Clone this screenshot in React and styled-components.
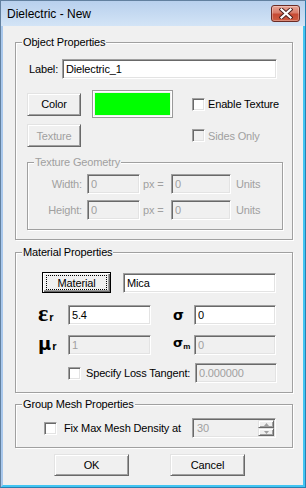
import React from "react";
import styled, { createGlobalStyle, css } from "styled-components";

const GlobalStyle = createGlobalStyle`
  html, body { margin: 0; padding: 0; background: #f0f0f0; }
  body {
    font-family: "Liberation Sans", Arial, sans-serif;
    font-size: 11px;
    letter-spacing: -0.15px;
    color: #000;
  }
  * { box-sizing: border-box; }
`;

const raised = css`
  border: 1px solid;
  border-color: #e3e3e3 #696969 #696969 #e3e3e3;
  box-shadow: inset 1px 1px 0 #fff, inset -1px -1px 0 #a0a0a0;
  background: #f0f0f0;
`;

const sunken = css`
  border: 1px solid;
  border-color: #a0a0a0 #fff #fff #a0a0a0;
  box-shadow: inset 1px 1px 0 #696969, inset -1px -1px 0 #e3e3e3;
`;

const Window = styled.div`
  width: 306px;
  height: 488px;
  border: 1px solid;
  border-color: #62809f #2a7fb0 #2a7fb0 #62809f;
  display: flex;
  flex-direction: column;
  background: #f0f0f0;
`;

const TitleBar = styled.div`
  height: 25px;
  flex: none;
  display: flex;
  align-items: center;
  padding: 0 5px 0 6px;
  background: linear-gradient(#b8d0ed, #d3e4f6);
`;

const Title = styled.span`
  flex: 1;
  font-size: 12px;
  letter-spacing: 0;
  color: #000;
`;

const CloseButton = styled.div`
  width: 29px;
  height: 17px;
  align-self: flex-start;
  margin-top: 4px;
  border: 1px solid #6b2b25;
  border-radius: 3px;
  background: linear-gradient(#e8a597 0%, #d87c6a 45%, #c64a34 55%, #cd5c42 100%);
  box-shadow: inset 0 0 0 1px rgba(255, 255, 255, 0.3);
  display: flex;
  align-items: center;
  justify-content: center;
`;

const Frame = styled.div`
  flex: 1;
  display: flex;
  flex-direction: column;
  border-style: solid;
  border-width: 0 2px 2px 2px;
  border-color: #a9c8ec #42c5f2 #42c5f2 #a9c8ec;
  padding: 10px 10px 0 12px;
`;

const Group = styled.fieldset`
  margin: ${(p) => p.$mt || 0}px 0 0 0;
  padding: 0;
  min-width: 0;
  border: 1px solid #a0a0a0;
  box-shadow: inset 1px 1px 0 #fff, 1px 1px 0 #fff;
`;

const Legend = styled.legend`
  margin-left: 6px;
  padding: 0 1px;
  height: 13px;
  line-height: 13px;
  background: #f0f0f0;
  color: ${(p) => (p.$disabled ? "#a0a0a0" : "#000")};
`;

const GroupBody = styled.div`
  padding: ${(p) => p.$pad};
`;

const LabelRow = styled.div`
  display: grid;
  grid-template-columns: 33px 215px;
  align-items: center;
  height: 20px;
  margin-left: 2px;
`;

const Text = styled.span`
  white-space: nowrap;
  color: ${(p) => (p.$disabled ? "#a0a0a0" : "#000")};
`;

const Field = styled.input`
  ${sunken};
  width: ${(p) => p.$w}px;
  height: 20px;
  padding: 0 3px;
  margin: 0;
  font: inherit;
  letter-spacing: inherit;
  outline: none;
  background: ${(p) => (p.disabled ? "#f0f0f0" : "#fff")};
  color: ${(p) => (p.disabled ? "#a0a0a0" : "#000")};
  -webkit-text-fill-color: ${(p) => (p.disabled ? "#a0a0a0" : "#000")};
  opacity: 1;
  margin-left: ${(p) => (p.$auto ? "auto" : "0")};
`;

const Button = styled.button`
  ${raised};
  width: ${(p) => p.$w}px;
  height: ${(p) => p.$h}px;
  padding: 0;
  margin: 0;
  font: inherit;
  letter-spacing: inherit;
  color: ${(p) => (p.disabled ? "#a0a0a0" : "#000")};
  display: flex;
  align-items: center;
  justify-content: center;
`;

const DefaultButton = styled.button`
  width: ${(p) => p.$w}px;
  height: ${(p) => p.$h}px;
  padding: 2px 3px;
  margin: 0;
  font: inherit;
  letter-spacing: inherit;
  color: #000;
  background: #f0f0f0;
  border: 1px solid #000;
  box-shadow: inset 1px 1px 0 #fff, inset -1px -1px 0 #696969, inset -2px -2px 0 #a0a0a0;
  display: flex;
`;

const FocusRect = styled.span`
  flex: 1;
  border: 1px dotted #000;
  display: flex;
  align-items: center;
  justify-content: center;
`;

const ColorGrid = styled.div`
  display: grid;
  grid-template-columns: 65px 100px 1fr;
  grid-template-rows: 28px 23px;
  row-gap: 6px;
  align-items: center;
  margin-top: 11px;
`;

const Swatch = styled.div`
  width: 81px;
  height: 28px;
  border: 1px solid #9a9a9a;
  box-shadow: inset 0 0 0 1px #fff;
  padding: 2px;
  background: #f0f0f0;
`;

const SwatchFill = styled.div`
  width: 100%;
  height: 100%;
  background: ${(p) => p.$color};
`;

const CheckWrap = styled.label`
  display: flex;
  align-items: center;
  gap: ${(p) => p.$gap}px;
  white-space: nowrap;
  color: ${(p) => (p.$disabled ? "#a0a0a0" : "#000")};
  grid-column: ${(p) => p.$col || "auto"};
`;

const CheckBox = styled.span`
  ${sunken};
  width: 13px;
  height: 13px;
  flex: none;
  background: ${(p) => (p.$disabled ? "#f0f0f0" : "#fff")};
`;

function Check({ label, gap, disabled, col }) {
  return (
    <CheckWrap $gap={gap} $disabled={disabled} $col={col}>
      <CheckBox $disabled={disabled} />
      {label}
    </CheckWrap>
  );
}

const GeoGrid = styled.div`
  display: grid;
  grid-template-columns: 59px 53px 31px 60px 1fr;
  grid-auto-rows: 20px;
  row-gap: 6px;
  align-items: center;
  padding: 5px 0 9px 0;
  color: #a0a0a0;
`;

const GeoLabel = styled.span`
  text-align: right;
  padding-right: ${(p) => p.$pr || 0}px;
  padding-left: ${(p) => p.$pl || 0}px;
  white-space: nowrap;
  justify-self: ${(p) => (p.$right ? "end" : "start")};
`;

const MatRow = styled.div`
  display: flex;
  align-items: center;
  gap: 12px;
  margin-left: 4px;
  height: 21px;
`;

const SymGrid = styled.div`
  display: grid;
  grid-template-columns: 30px 83px 43px 82px;
  grid-auto-rows: 20px;
  row-gap: 10px;
  align-items: center;
  margin-top: 12px;
`;

const Sym = styled.span`
  font-family: ${(p) => (p.$serif ? '"Liberation Serif", serif' : '"DejaVu Sans", sans-serif')};
  font-weight: bold;
  font-size: ${(p) => p.$size}px;
  line-height: 20px;
  letter-spacing: 0;
  white-space: nowrap;
  padding-left: ${(p) => p.$pl || 0}px;
`;

const SymSub = styled.span`
  font-family: "Liberation Sans", Arial, sans-serif;
  font-weight: bold;
  font-size: ${(p) => p.$size || 11}px;
  margin-left: ${(p) => (p.$tight ? 0 : 1)}px;
  letter-spacing: ${(p) => (p.$tight ? "-0.5px" : "0")};
  vertical-align: ${(p) => p.$drop || 0}px;
`;

const LossRow = styled.div`
  display: flex;
  align-items: center;
  height: 20px;
  margin-top: 8px;
  padding-left: 30px;
`;

const MeshRow = styled.div`
  display: flex;
  align-items: center;
  height: 20px;
`;

const SpinField = styled.div`
  ${sunken};
  width: 84px;
  height: 20px;
  margin-left: auto;
  background: #f0f0f0;
  display: flex;
  align-items: stretch;
  padding: 1px 1px 1px 4px;
`;

const SpinValue = styled.span`
  flex: 1;
  color: #a0a0a0;
  display: flex;
  align-items: center;
`;

const SpinButtons = styled.div`
  width: 16px;
  display: flex;
  flex-direction: column;
`;

const SpinBtn = styled.div`
  ${raised};
  flex: 1;
  display: flex;
  align-items: center;
  justify-content: center;
`;

const Footer = styled.div`
  display: flex;
  gap: 41px;
  margin-top: 6px;
  padding-left: 39px;
`;

function Arrow({ up }) {
  return (
    <svg width="5" height="3" viewBox="0 0 5 3">
      <path d={up ? "M2.5 0 L5 3 L0 3 Z" : "M0 0 L5 0 L2.5 3 Z"} fill="#a0a0a0" />
    </svg>
  );
}

function CloseIcon() {
  return (
    <svg width="14" height="11" viewBox="0 0 14 11">
      <path d="M2.5 1.5 L11.5 9.5 M11.5 1.5 L2.5 9.5" stroke="#4a1f1c" strokeWidth="4" strokeLinecap="square" />
      <path d="M2.5 1.5 L11.5 9.5 M11.5 1.5 L2.5 9.5" stroke="#ffffff" strokeWidth="2.2" strokeLinecap="square" />
    </svg>
  );
}

export default function App() {
  return (
    <>
      <GlobalStyle />
      <Window>
        <TitleBar>
          <Title>Dielectric - New</Title>
          <CloseButton aria-label="Close">
            <CloseIcon />
          </CloseButton>
        </TitleBar>
        <Frame>
          <Group>
            <Legend>Object Properties</Legend>
            <GroupBody $pad="10px 9px 9px 11px">
              <LabelRow>
                <Text>Label:</Text>
                <Field $w={215} defaultValue="Dielectric_1" />
              </LabelRow>
              <ColorGrid>
                <Button $w={54} $h={23}>Color</Button>
                <Swatch>
                  <SwatchFill $color="#00ff00" />
                </Swatch>
                <Check label="Enable Texture" gap={3} />
                <Button $w={54} $h={23} disabled>Texture</Button>
                <Check label="Sides Only" gap={3} disabled col={3} />
              </ColorGrid>
              <Group $mt={9}>
                <Legend $disabled>Texture Geometry</Legend>
                <GeoGrid>
                  <GeoLabel $right $pr={5}>Width:</GeoLabel>
                  <Field $w={53} disabled defaultValue="0" />
                  <GeoLabel $pl={3}>px =</GeoLabel>
                  <Field $w={60} disabled defaultValue="0" />
                  <GeoLabel $pl={5}>Units</GeoLabel>
                  <GeoLabel $right $pr={5}>Height:</GeoLabel>
                  <Field $w={53} disabled defaultValue="0" />
                  <GeoLabel $pl={3}>px =</GeoLabel>
                  <Field $w={60} disabled defaultValue="0" />
                  <GeoLabel $pl={5}>Units</GeoLabel>
                </GeoGrid>
              </Group>
            </GroupBody>
          </Group>

          <Group $mt={6}>
            <Legend>Material Properties</Legend>
            <GroupBody $pad="13px 15px 9px 22px">
              <MatRow>
                <DefaultButton $w={69} $h={21}>
                  <FocusRect>Material</FocusRect>
                </DefaultButton>
                <Field $w={153} defaultValue="Mica" />
              </MatRow>
              <SymGrid>
                <Sym $serif $size={24}>
                  ε<SymSub>r</SymSub>
                </Sym>
                <Field $w={83} defaultValue="5.4" />
                <Sym $size={14} $pl={22}>σ</Sym>
                <Field $w={82} defaultValue="0" />
                <Sym $size={18}>
                  μ<SymSub>r</SymSub>
                </Sym>
                <Field $w={83} disabled defaultValue="1" />
                <Sym $size={13} $pl={22}>
                  σ<SymSub $size={8} $tight $drop={-2}>m</SymSub>
                </Sym>
                <Field $w={82} disabled defaultValue="0" />
              </SymGrid>
              <LossRow>
                <Check label="Specify Loss Tangent:" gap={5} />
                <Field $w={82} $auto disabled defaultValue="0.000000" />
              </LossRow>
            </GroupBody>
          </Group>

          <Group $mt={5}>
            <Legend>Group Mesh Properties</Legend>
            <GroupBody $pad="7px 16px 9px 28px">
              <MeshRow>
                <Check label="Fix Max Mesh Density at" gap={7} />
                <SpinField>
                  <SpinValue>30</SpinValue>
                  <SpinButtons>
                    <SpinBtn>
                      <Arrow up />
                    </SpinBtn>
                    <SpinBtn>
                      <Arrow />
                    </SpinBtn>
                  </SpinButtons>
                </SpinField>
              </MeshRow>
            </GroupBody>
          </Group>

          <Footer>
            <Button $w={75} $h={22}>OK</Button>
            <Button $w={75} $h={22}>Cancel</Button>
          </Footer>
        </Frame>
      </Window>
    </>
  );
}
